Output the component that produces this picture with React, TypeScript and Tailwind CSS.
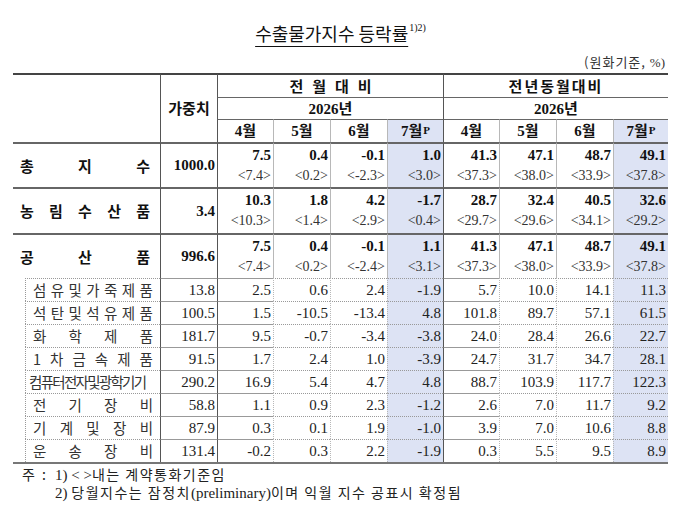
import React from "react";

const F = "font-['Liberation_Serif','Noto_Sans_CJK_KR',serif]";
const K = "font-['Noto_Sans_CJK_KR','Liberation_Serif',sans-serif]";

type Main = { label: string[]; w: string; vals: [string, string][] };
const mains: Main[] = [
  {
    label: ["총", "지", "수"],
    w: "1000.0",
    vals: [["7.5", "<7.4>"], ["0.4", "<0.2>"], ["-0.1", "<-2.3>"], ["1.0", "<3.0>"], ["41.3", "<37.3>"], ["47.1", "<38.0>"], ["48.7", "<33.9>"], ["49.1", "<37.8>"]],
  },
  {
    label: ["농", "림", "수", "산", "품"],
    w: "3.4",
    vals: [["10.3", "<10.3>"], ["1.8", "<1.4>"], ["4.2", "<2.9>"], ["-1.7", "<0.4>"], ["28.7", "<29.7>"], ["32.4", "<29.6>"], ["40.5", "<34.1>"], ["32.6", "<29.2>"]],
  },
  {
    label: ["공", "산", "품"],
    w: "996.6",
    vals: [["7.5", "<7.4>"], ["0.4", "<0.2>"], ["-0.1", "<-2.4>"], ["1.1", "<3.1>"], ["41.3", "<37.3>"], ["47.1", "<38.0>"], ["48.7", "<33.9>"], ["49.1", "<37.8>"]],
  },
];

type Sub = { label: string[]; w: string; vals: string[]; tight?: boolean };
const subs: Sub[] = [
  { label: ["섬", "유", "및", "가", "죽", "제", "품"], w: "13.8", vals: ["2.5", "0.6", "2.4", "-1.9", "5.7", "10.0", "14.1", "11.3"] },
  { label: ["석", "탄", "및", "석", "유", "제", "품"], w: "100.5", vals: ["1.5", "-10.5", "-13.4", "4.8", "101.8", "89.7", "57.1", "61.5"] },
  { label: ["화", "학", "제", "품"], w: "181.7", vals: ["9.5", "-0.7", "-3.4", "-3.8", "24.0", "28.4", "26.6", "22.7"] },
  { label: ["1", "차", "금", "속", "제", "품"], w: "91.5", vals: ["1.7", "2.4", "1.0", "-3.9", "24.7", "31.7", "34.7", "28.1"] },
  { label: ["컴퓨터전자및광학기기"], w: "290.2", vals: ["16.9", "5.4", "4.7", "4.8", "88.7", "103.9", "117.7", "122.3"], tight: true },
  { label: ["전", "기", "장", "비"], w: "58.8", vals: ["1.1", "0.9", "2.3", "-1.2", "2.6", "7.0", "11.7", "9.2"] },
  { label: ["기", "계", "및", "장", "비"], w: "87.9", vals: ["0.3", "0.1", "1.9", "-1.0", "3.9", "7.0", "10.6", "8.8"] },
  { label: ["운", "송", "장", "비"], w: "131.4", vals: ["-0.2", "0.3", "2.2", "-1.9", "0.3", "5.5", "9.5", "8.9"] },
];

const colW = [147, 57, 56, 57, 57, 56, 56, 57, 57, 55];

function leftBorder(i: number) {
  if (i === 0 || i === 4) return "border-l border-l-[#555]";
  return "border-l border-l-[#b8b8b8]";
}
function hi(i: number) {
  return i === 3 || i === 7 ? "bg-[#dde3f4]" : "";
}

export default function App() {
  return (
    <div className={`w-[699px] h-[516px] bg-white text-[#111] ${F}`}>
      <div className="ml-[13px] w-[655px]">
        <div className="pt-[22px] h-[44px] flex justify-center">
          <span className={`${K} text-[18px] leading-[22px] text-[#111] underline underline-offset-[5px] decoration-[1px]`}>
            수출물가지수 등락률
          </span>
          <span className={`${F} text-[10px] leading-[10px] ml-[1px] mt-[1px]`}>1)2)</span>
        </div>
        <div className={`h-[29px] pt-[9px] text-right pr-[3px] text-[13px] leading-[18px] text-[#333]`}>
          <span className={`${K} tracking-[1px]`}>(원화기준, </span>
          <span className={F}> %)</span>
        </div>
        <table className="table-fixed border-separate border-spacing-0 w-[655px]">
          <colgroup>
            {colW.map((w, i) => (
              <col key={i} style={{ width: w }} />
            ))}
          </colgroup>
          <thead>
            <tr>
              <td rowSpan={3} className="border-t-2 border-t-[#444]"></td>
              <td rowSpan={3} className={`border-t-2 border-t-[#444] border-l border-l-[#555] text-center align-middle ${K} font-bold text-[15px]`}>
                가중치
              </td>
              <td colSpan={4} className={`h-[24px] border-t-2 border-t-[#444] border-l border-l-[#555] text-center ${K} font-bold text-[15px] leading-[20px] tracking-[9px] pl-[9px]`}>
                전월대비
              </td>
              <td colSpan={4} className={`h-[24px] border-t-2 border-t-[#444] border-l border-l-[#555] text-center ${K} font-bold text-[15px] leading-[20px] tracking-[2px]`}>
                전년동월대비
              </td>
            </tr>
            <tr>
              <td colSpan={4} className="h-[22px] border-t border-t-[#666] border-l border-l-[#555] text-center font-bold text-[15px] leading-[20px]">
                2026년
              </td>
              <td colSpan={4} className="h-[22px] border-t border-t-[#666] border-l border-l-[#555] text-center font-bold text-[15px] leading-[20px]">
                2026년
              </td>
            </tr>
            <tr>
              {["4월", "5월", "6월", "7월", "4월", "5월", "6월", "7월"].map((m, i) => (
                <td key={i} className={`h-[23px] border-t border-t-[#666] ${leftBorder(i)} ${hi(i)} text-center font-bold text-[15px] leading-[20px]`}>
                  {m}
                  {(i === 3 || i === 7) && <sup className="text-[11px] font-bold ml-[1px] relative top-[-2px]">P</sup>}
                </td>
              ))}
            </tr>
          </thead>
          <tbody>
            {mains.map((r, ri) => (
              <tr key={ri}>
                <td className={`${ri === 1 ? "h-[46px]" : "h-[45px]"} border-t-2 border-t-[#666] pl-[7px] pr-[10px]`}>
                  <div className={`flex justify-between ${K} font-bold text-[15px] leading-[20px]`}>
                    {r.label.map((c, i) => (
                      <span key={i}>{c}</span>
                    ))}
                  </div>
                </td>
                <td className="border-t-2 border-t-[#666] border-l border-l-[#555] text-right pr-[2px] font-bold text-[15px]">
                  {r.w}
                </td>
                {r.vals.map((v, i) => (
                  <td key={i} className={`border-t-2 border-t-[#666] ${leftBorder(i)} ${hi(i)} text-right pr-[2px] align-top pt-[1px]`}>
                    <div className="font-bold text-[15px] leading-[20px] text-[#111]">{v[0]}</div>
                    <div className="text-[14px] leading-[21px] text-[#333]">{v[1]}</div>
                  </td>
                ))}
              </tr>
            ))}
            {subs.map((r, ri) => (
              <tr key={ri}>
                <td className="h-[23px] p-0 pl-[12px]">
                  <div className={`h-[23px] border-t border-dotted border-t-[#999] border-l border-l-[#999] flex items-center ${r.tight ? "pl-[3px]" : "justify-between pl-[7px] pr-[7px]"} ${K} text-[14.5px] text-[#333]`}>
                    {r.tight ? (
                      <span className="tracking-[-1.7px] whitespace-nowrap">{r.label[0]}</span>
                    ) : (
                      r.label.map((c, i) => <span key={i}>{c}</span>)
                    )}
                  </div>
                </td>
                <td className="h-[23px] border-t border-dotted border-t-[#999] border-l border-solid border-l-[#555] text-right pr-[2px] text-[15px] leading-[20px] text-[#222]">
                  {r.w}
                </td>
                {r.vals.map((v, i) => (
                  <td
                    key={i}
                    className={`h-[23px] border-t border-dotted border-t-[#999] ${i === 0 || i === 4 ? "border-l border-solid border-l-[#555]" : "border-l border-l-[#b8b8b8]"} ${hi(i)} text-right pr-[2px] text-[15px] leading-[20px] text-[#222]`}
                  >
                    {v}
                  </td>
                ))}
              </tr>
            ))}
            <tr>
              <td colSpan={10} className="h-0 p-0 border-t-2 border-t-[#777]"></td>
            </tr>
          </tbody>
        </table>
        <div className={`${K} text-[14px] leading-[17px] text-[#222] mt-[2px]`}>
          <div className="flex">
            <span className="ml-[9px] w-[33px] tracking-[2px]">주 :</span>
            <span>
              <span className={`${F} text-[15px]`}>1) </span>
              <span className={`${F} text-[15px]`}>&lt; &gt;</span>
              <span className="tracking-[1.5px]">내는 계약통화기준임</span>
            </span>
          </div>
          <div className="flex">
            <span className="ml-[42px]">
              <span className={`${F} text-[15px]`}>2) </span>
              <span className="tracking-[1.5px]">당월지수는 잠정치</span>
              <span className={`${F} text-[15px]`}>(preliminary)</span>
              <span className="tracking-[1.5px]">이며 익월 지수 공표시 확정됨</span>
            </span>
          </div>
        </div>
      </div>
    </div>
  );
}
